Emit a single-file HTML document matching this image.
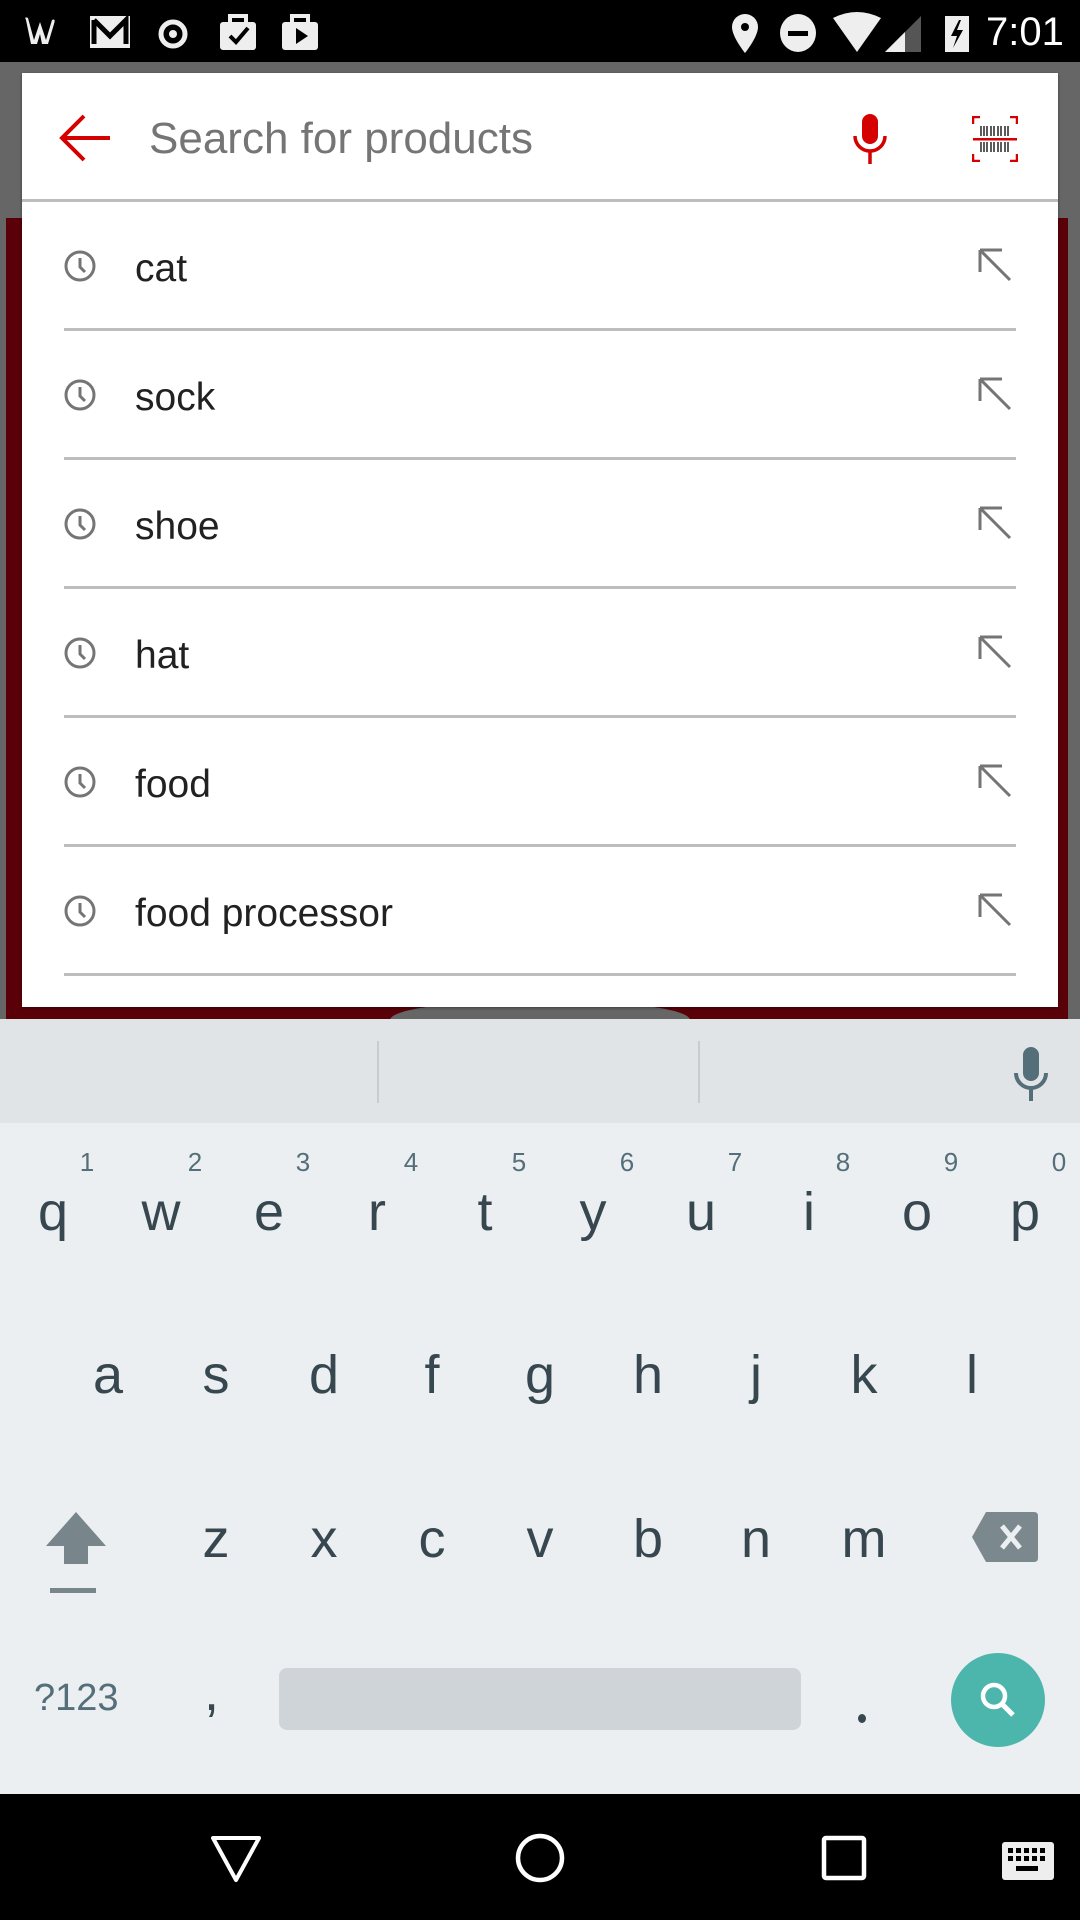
<!DOCTYPE html>
<html><head><meta charset="utf-8"><style>
*{margin:0;padding:0;box-sizing:border-box}
body{width:1080px;height:1920px;position:relative;overflow:hidden;background:#666;font-family:"Liberation Sans",sans-serif}
.a{position:absolute}
.t{position:absolute;line-height:1;white-space:nowrap}
.k{position:absolute;width:108px;text-align:center;font-size:54px;line-height:1;color:#37474f}
.n{position:absolute;width:30px;text-align:center;font-size:26px;line-height:1;color:#546e7a}
.row{position:absolute;left:135px;font-size:39px;line-height:1;color:#212121}
.div{position:absolute;left:64px;width:952px;height:3px;background:#bdbdbd}
</style></head><body>
<!-- status bar -->
<div class="a" style="left:0;top:0;width:1080px;height:62px;background:#000"></div>
<div class="t" style="left:986px;top:12px;font-size:40px;color:#fff">7:01</div>
<svg class="a" style="left:20px;top:10px" width="310" height="44" viewBox="0 0 310 44">
<path d="M6 10 Q4 6 8 8 L14 30 L20 12 L26 30 L32 10 Q36 8 34 14 L28 34 L22 34 L20 24 L17 34 L11 34 Z" fill="#eee"/>
<rect x="70" y="6" width="40" height="32" fill="#eee"/><path d="M74 10 L74 34 M74 10 L90 26 L106 10 L106 34" stroke="#000" stroke-width="5" fill="none"/>
<circle cx="153" cy="24" r="12" fill="none" stroke="#eee" stroke-width="5"/><circle cx="153" cy="24" r="4" fill="#eee"/>
<rect x="200" y="12" width="36" height="28" rx="3" fill="#eee"/><rect x="210" y="6" width="16" height="10" fill="none" stroke="#eee" stroke-width="4"/><path d="M210 26 L216 32 L228 18" stroke="#000" stroke-width="4" fill="none"/>
<rect x="262" y="12" width="36" height="28" rx="3" fill="#eee"/><rect x="272" y="6" width="16" height="10" fill="none" stroke="#eee" stroke-width="4"/><path d="M276 18 L288 26 L276 34 Z" fill="#000"/>
</svg>
<svg class="a" style="left:725px;top:10px" width="250" height="44" viewBox="0 0 250 44">
<path d="M20 4 a13 13 0 0 1 13 13 c0 10 -13 26 -13 26 c0 0 -13 -16 -13 -26 a13 13 0 0 1 13 -13z" fill="#eee"/><circle cx="20" cy="17" r="4" fill="#000"/>
<ellipse cx="73" cy="23" rx="18" ry="19" fill="#eee"/><rect x="63" y="21" width="20" height="5" fill="#000"/>
<path d="M108 8 Q132 -4 156 8 L132 42 Z" fill="#eee"/>
<path d="M196 6 L196 42 L160 42 Z" fill="#555"/><path d="M180 22 L180 42 L160 42 Z" fill="#eee"/>
<rect x="220" y="6" width="24" height="36" fill="#eee"/><path d="M234 10 L226 26 L232 26 L228 38 L238 20 L232 20 L236 10Z" fill="#000"/>
</svg>
<!-- background image strip -->
<div class="a" style="left:6px;top:218px;width:1062px;height:801px;background:#5a0008"></div>
<div class="a" style="left:390px;top:1000px;width:300px;height:40px;border-radius:50%;background:#666"></div>
<!-- card -->
<div class="a" style="left:22px;top:73px;width:1036px;height:934px;background:#fff;box-shadow:0 1px 3px rgba(0,0,0,.4)"></div>
<div class="a" style="left:22px;top:199px;width:1036px;height:3px;background:#bdbdbd"></div>
<svg class="a" style="left:58px;top:114px" width="54" height="48" viewBox="0 0 54 48"><path d="M52 24 H4 M26 2 L4 24 L26 46" stroke="#d50000" stroke-width="4" fill="none"/></svg>
<div class="t" style="left:149px;top:117px;font-size:44px;color:#757575">Search for products</div>
<svg class="a" style="left:850px;top:112px" width="40" height="52" viewBox="0 0 40 52"><rect x="12" y="2" width="16" height="30" rx="8" fill="#d50000"/><path d="M5 24 a15 15 0 0 0 30 0 M20 39 V52" stroke="#d50000" stroke-width="3.5" fill="none"/></svg>
<svg class="a" style="left:972px;top:116px" width="46" height="46" viewBox="0 0 46 46">
<path d="M1 8 V1 H8 M38 1 H45 V8 M1 38 V45 H8 M38 45 H45 V38" stroke="#d50000" stroke-width="2.5" fill="none"/>
<g stroke="#333" stroke-width="1.6"><path d="M9 10V20M12 10V20M15 10V20M19 10V20M22 10V20M26 10V20M29 10V20M33 10V20M36 10V20M9 26V36M12 26V36M15 26V36M19 26V36M22 26V36M26 26V36M29 26V36M33 26V36M36 26V36"/></g>
<rect x="1" y="22" width="44" height="2.5" fill="#d50000"/></svg>
<!-- rows -->
<div id="rows"></div>
<script>
var items=["cat","sock","shoe","hat","food","food processor"];
var h="";
for(var i=0;i<6;i++){var c=267+i*129;
h+='<svg class="a" style="left:63px;top:'+(c-18)+'px" width="34" height="34" viewBox="0 0 34 34"><circle cx="17" cy="17" r="14" fill="none" stroke="#757575" stroke-width="3"/><path d="M17 9 V18 L22 23" stroke="#757575" stroke-width="3" fill="none"/></svg>';
h+='<div class="row" style="top:'+(c-18)+'px">'+items[i]+'</div>';
h+='<svg class="a" style="left:978px;top:'+(c-19)+'px" width="34" height="34" viewBox="0 0 34 34"><path d="M2 2 L32 32 M2 2 H24 M2 2 V24" stroke="#757575" stroke-width="3" fill="none"/></svg>';
h+='<div class="div" style="top:'+(328+i*129)+'px"></div>';}
document.getElementById("rows").innerHTML=h;
</script>
<!-- keyboard -->
<div class="a" style="left:0;top:1019px;width:1080px;height:104px;background:#e1e4e7"></div>
<div class="a" style="left:0;top:1123px;width:1080px;height:671px;background:#eceff1"></div>
<div class="a" style="left:377px;top:1041px;width:2px;height:62px;background:#c8cbcf"></div>
<div class="a" style="left:698px;top:1041px;width:2px;height:62px;background:#c8cbcf"></div>
<svg class="a" style="left:1011px;top:1047px" width="40" height="56" viewBox="0 0 40 56"><rect x="12" y="0" width="16" height="34" rx="8" fill="#546e7a"/><path d="M5 26 a15 15 0 0 0 30 0 M20 41 V54" stroke="#546e7a" stroke-width="4" fill="none"/></svg>
<div id="kb"></div>
<script>
var r1="qwertyuiop",r2="asdfghjkl",r3="zxcvbnm",h="";
for(var i=0;i<10;i++){var x=53+i*108;h+='<div class="k" style="left:'+(x-54)+'px;top:1185px">'+r1[i]+'</div><div class="n" style="left:'+(x+34-15)+'px;top:1149px">'+((i+1)%10)+'</div>';}
for(var i=0;i<9;i++){var x=108+i*108;h+='<div class="k" style="left:'+(x-54)+'px;top:1348px">'+r2[i]+'</div>';}
for(var i=0;i<7;i++){var x=216+i*108;h+='<div class="k" style="left:'+(x-54)+'px;top:1512px">'+r3[i]+'</div>';}
document.getElementById("kb").innerHTML=h;
</script>
<svg class="a" style="left:44px;top:1510px" width="64" height="84" viewBox="0 0 64 84"><path d="M32 2 L62 36 H44 V54 H20 V36 H2Z" fill="#78868c"/><rect x="6" y="78" width="46" height="5" fill="#78868c"/></svg>
<svg class="a" style="left:972px;top:1512px" width="66" height="50" viewBox="0 0 66 50"><path d="M14 0 H62 Q66 0 66 4 V46 Q66 50 62 50 H14 L0 25Z" fill="#7b898f"/><path d="M30 14 L48 36 M48 14 L30 36" stroke="#eceff1" stroke-width="5"/></svg>
<div class="t" style="left:34px;top:1679px;font-size:38px;color:#546e7a">?123</div>
<div class="t" style="left:204px;top:1665px;font-size:54px;color:#37474f">,</div>
<div class="a" style="left:279px;top:1668px;width:522px;height:62px;border-radius:8px;background:#cfd4d8"></div>
<div class="a" style="left:858px;top:1714px;width:8px;height:9px;border-radius:50%;background:#37474f"></div>
<div class="a" style="left:951px;top:1653px;width:94px;height:94px;border-radius:50%;background:#4db6ac"></div>
<svg class="a" style="left:975px;top:1677px" width="48" height="48" viewBox="0 0 48 48"><circle cx="19" cy="19" r="11" fill="none" stroke="#fff" stroke-width="4.5"/><path d="M27 27 L38 38" stroke="#fff" stroke-width="5"/></svg>
<!-- nav bar -->
<div class="a" style="left:0;top:1794px;width:1080px;height:126px;background:#000"></div>
<svg class="a" style="left:0;top:1830px" width="1080" height="60" viewBox="0 0 1080 60">
<path d="M213 8 H259 L236 50Z" fill="none" stroke="#fff" stroke-width="4" stroke-linejoin="round"/>
<circle cx="540" cy="28" r="22" fill="none" stroke="#fff" stroke-width="4.5"/>
<rect x="824" y="8" width="40" height="40" rx="2" fill="none" stroke="#fff" stroke-width="4.5"/>
<rect x="1002" y="12" width="52" height="38" rx="3" fill="#eee"/>
<g fill="#000"><rect x="1008" y="18" width="5" height="5"/><rect x="1016" y="18" width="5" height="5"/><rect x="1024" y="18" width="5" height="5"/><rect x="1032" y="18" width="5" height="5"/><rect x="1040" y="18" width="5" height="5"/><rect x="1008" y="26" width="5" height="5"/><rect x="1016" y="26" width="5" height="5"/><rect x="1024" y="26" width="5" height="5"/><rect x="1032" y="26" width="5" height="5"/><rect x="1040" y="26" width="5" height="5"/><rect x="1016" y="36" width="22" height="5"/></g>
</svg>
</body></html>
